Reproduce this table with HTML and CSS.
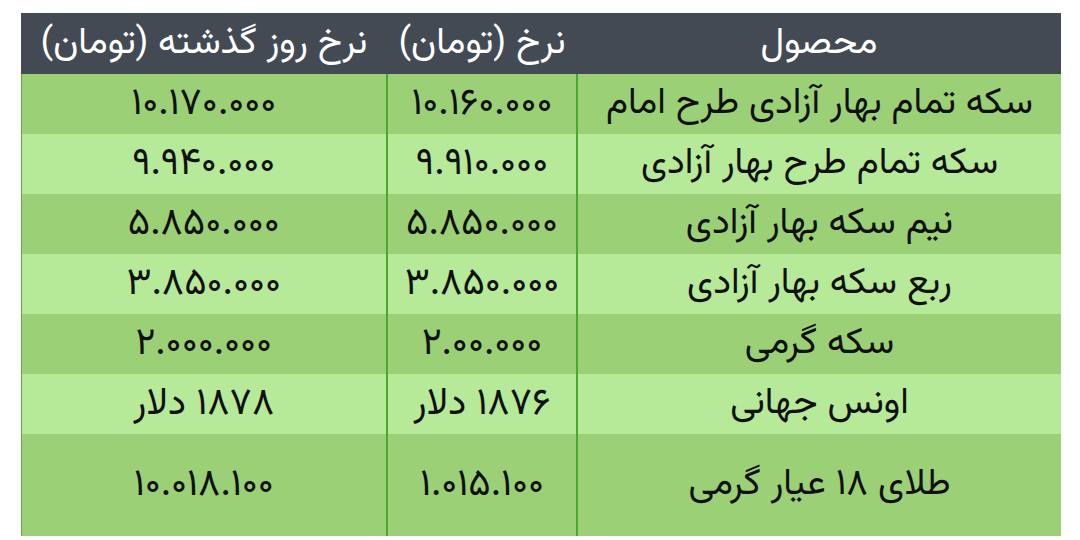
FILE: index.html
```html
<!DOCTYPE html>
<html lang="fa" dir="rtl">
<head>
<meta charset="utf-8">
<title>قیمت سکه</title>
<link rel="stylesheet" href="styles.css">
</head>
<body>
<table class="prices">
  <colgroup>
    <col class="c-product">
    <col class="c-price">
    <col class="c-prev">
  </colgroup>
  <thead>
    <tr>
      <th>محصول</th>
      <th>نرخ (تومان)</th>
      <th>نرخ روز گذشته (تومان)</th>
    </tr>
  </thead>
  <tbody>
    <tr class="dark"><td>سکه تمام بهار آزادی طرح امام</td><td class="num">۱۰.۱۶۰.۰۰۰</td><td class="num">۱۰.۱۷۰.۰۰۰</td></tr>
    <tr class="light"><td>سکه تمام طرح بهار آزادی</td><td class="num">۹.۹۱۰.۰۰۰</td><td class="num">۹.۹۴۰.۰۰۰</td></tr>
    <tr class="dark"><td>نیم سکه بهار آزادی</td><td class="num">۵.۸۵۰.۰۰۰</td><td class="num">۵.۸۵۰.۰۰۰</td></tr>
    <tr class="light"><td>ربع سکه بهار آزادی</td><td class="num">۳.۸۵۰.۰۰۰</td><td class="num">۳.۸۵۰.۰۰۰</td></tr>
    <tr class="dark"><td>سکه گرمی</td><td class="num">۲.۰۰.۰۰۰</td><td class="num">۲.۰۰۰.۰۰۰</td></tr>
    <tr class="light"><td>اونس جهانی</td><td class="num">۱۸۷۶ دلار</td><td class="num">۱۸۷۸ دلار</td></tr>
    <tr class="dark tall"><td>طلای ۱۸ عیار گرمی</td><td class="num">۱.۰۱۵.۱۰۰</td><td class="num">۱۰.۰۱۸.۱۰۰</td></tr>
  </tbody>
</table>
</body>
</html>
```

FILE: styles.css
```css
html, body {
  margin: 0;
  padding: 0;
  background: #ffffff;
}

body {
  padding: 13px 19px 0 21px;
  font-family: "Vazirmatn", "Noto Sans Arabic", "DejaVu Sans", sans-serif;
}

.prices {
  width: 1040px;
  border-collapse: collapse;
  table-layout: fixed;
  direction: rtl;
}

.c-product { width: 484px; }
.c-price { width: 190px; }
.c-prev { width: 366px; }

.prices th {
  background: #434a54;
  color: #ffffff;
  font-weight: normal;
  font-size: 37px;
  height: 61px;
  padding: 0;
  text-align: center;
  white-space: nowrap;
}

.prices td {
  font-size: 37px;
  color: #111111;
  height: 60px;
  padding: 0;
  text-align: center;
  white-space: nowrap;
}

.prices td.num {
  font-size: 38px;
}

.prices td + td {
  border-right: 2px solid #4da62e;
}

.prices td:last-child {
  border-left: 1px solid #6a9f4f;
}

.dark td { background: #9cd077; }
.light td { background: #b7ea98; }

.tall td { height: 102px; }
```
